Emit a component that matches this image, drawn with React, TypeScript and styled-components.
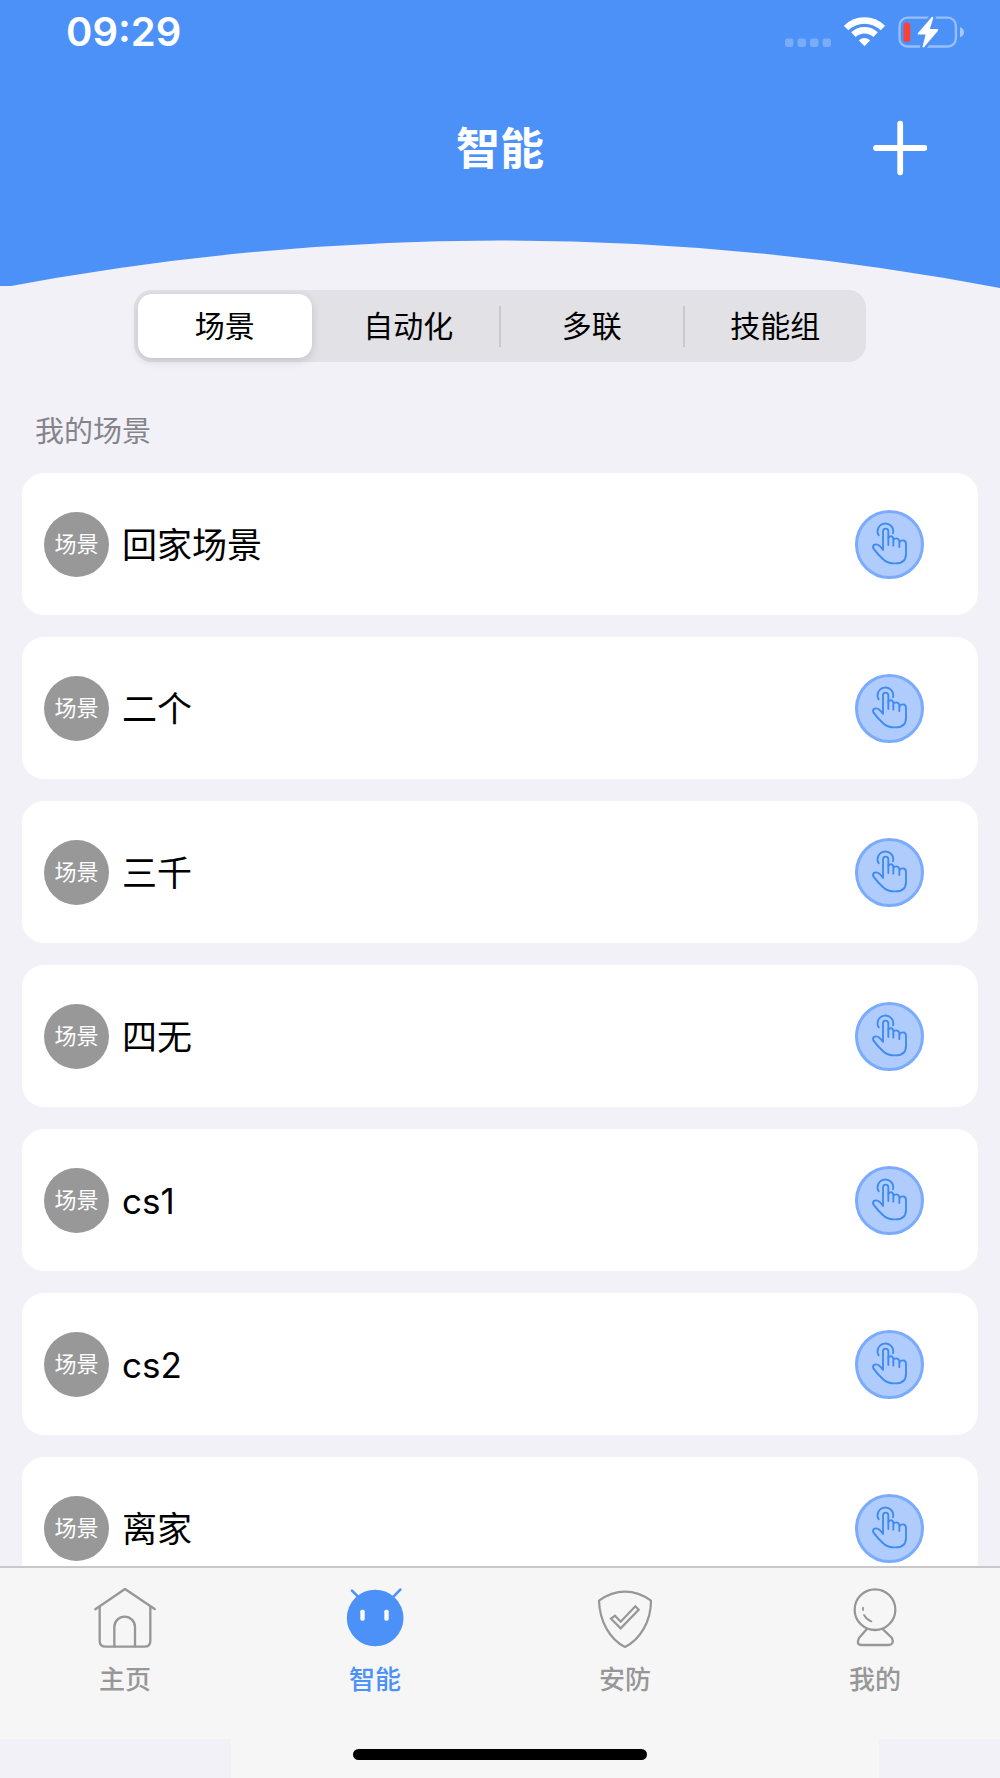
import React, { useState } from "react";
import styled, { createGlobalStyle } from "styled-components";

const blue = "#4c91f7";
const pageBg = "#f2f1f7";
const barBg = "#f6f6f6";
const grey = "#979797";

const GlobalStyle = createGlobalStyle`
  * { box-sizing: border-box; }
  body {
    margin: 0;
    background: ${pageBg};
    font-family: Inter, "Noto Sans CJK SC", sans-serif;
    color: #000;
  }
  button { font: inherit; color: inherit; border: 0; padding: 0; background: none; cursor: pointer; }
  svg { display: block; }
`;

const Page = styled.div`
  display: flex;
  flex-direction: column;
  height: 100vh;
  overflow: hidden;
`;

const Header = styled.header`
  display: flex;
  flex-direction: column;
  background: ${blue};
  color: #fff;
`;

const StatusBar = styled.div`
  display: flex;
  align-items: center;
  justify-content: space-between;
  height: 64px;
  padding: 0 36px 0 66px;
`;

const Clock = styled.time`
  font-size: 40px;
  line-height: 48px;
  font-weight: 600;
`;

const StatusIcons = styled.div`
  display: flex;
  align-items: center;
  gap: 13px;
`;

const TitleRow = styled.div`
  display: grid;
  grid-template-columns: 1fr auto 1fr;
  align-items: center;
  height: 168px;
  padding: 0 73px;
`;

const Title = styled.h1`
  grid-column: 2;
  margin: 0;
  padding-top: 2px;
  font-size: 44px;
  line-height: 64px;
  font-weight: 700;
`;

const AddButton = styled.button`
  justify-self: end;
`;

const Curve = styled.svg`
  width: 100%;
  height: 56px;
`;

const Main = styled.main`
  flex: 1;
  min-height: 0;
  display: flex;
  flex-direction: column;
`;

const Segments = styled.div`
  display: grid;
  grid-template-columns: 1fr 2px 1fr 2px 1fr 2px 1fr;
  align-items: center;
  width: 73.2%;
  height: 72px;
  margin: 2px auto 0;
  flex: none;
  border-radius: 18px;
  background: #e2e1e6;
`;

const Segment = styled.button<{ $active: boolean }>`
  align-self: stretch;
  margin: ${(p) => (p.$active ? "4px" : "0")};
  border-radius: 14px;
  font-size: 30px;
  line-height: 40px;
  background: ${(p) => (p.$active ? "#fff" : "transparent")};
  box-shadow: ${(p) => (p.$active ? "0 3px 10px rgba(0, 0, 0, 0.14)" : "none")};
`;

const Divider = styled.span<{ $hidden: boolean }>`
  height: 41px;
  background: ${(p) => (p.$hidden ? "transparent" : "#cac9ce")};
`;

const SectionTitle = styled.h2`
  flex: none;
  margin: 49px 35px 20px;
  font-size: 29px;
  line-height: 42px;
  font-weight: 400;
  color: #85848a;
`;

const SceneList = styled.ul`
  flex: 1;
  min-height: 0;
  overflow-y: auto;
  scrollbar-width: none;
  margin: 0;
  padding: 0 22px;
  list-style: none;
  display: flex;
  flex-direction: column;
  gap: 22px;
`;

const SceneCard = styled.li`
  flex: none;
  display: flex;
  align-items: center;
  gap: 13px;
  height: 142px;
  padding: 0 54px 0 22px;
  border-radius: 22px;
  background: #fff;
`;

const Badge = styled.span`
  display: grid;
  place-items: center;
  width: 65px;
  height: 65px;
  border-radius: 50%;
  background: #989898;
  color: #fff;
  font-size: 22px;
  line-height: 32px;
`;

const SceneName = styled.span`
  flex: 1;
  padding-top: 2px;
  font-size: 35px;
  line-height: 50px;
`;

const TabBar = styled.nav`
  flex: none;
  display: grid;
  grid-template-columns: repeat(4, 1fr);
  height: 173px;
  border-top: 2px solid #c8c8c9;
  background: ${barBg};
`;

const Tab = styled.button<{ $active: boolean }>`
  display: flex;
  flex-direction: column;
  align-items: center;
  gap: 13px;
  padding-top: 19px;
  color: ${(p) => (p.$active ? blue : grey)};
  font-size: 26px;
  line-height: 36px;
  font-weight: 500;
`;

const HomeArea = styled.div`
  flex: none;
  display: flex;
  justify-content: center;
  height: 39px;
  padding-top: 10px;
  background: linear-gradient(
    to right,
    ${pageBg} 23.1%,
    ${barBg} 23.1%,
    ${barBg} 87.9%,
    ${pageBg} 87.9%
  );
`;

const HomeIndicator = styled.span`
  width: 29.4%;
  height: 11px;
  border-radius: 6px;
  background: #000;
`;

const SignalIcon = () => (
  <svg width="46" height="30" viewBox="0 0 46 30" fill="#fff" fillOpacity="0.26" aria-hidden="true">
    {[0, 12.5, 25, 37.5].map((x) => (
      <rect key={x} x={x} y="21.5" width="8.5" height="8.5" rx="2.4" />
    ))}
  </svg>
);

const WifiIcon = () => (
  <svg width="41" height="30" viewBox="0 0 41 30" fill="none" stroke="#fff" strokeWidth="6.4" aria-hidden="true">
    <path d="M2.1 11.1A26 26 0 0 1 38.9 11.1" />
    <path d="M9.4 17.6A16.2 16.2 0 0 1 31.6 17.6" />
    <path
      d="M15.3 23.4A8.2 8.2 0 0 1 25.7 23.4L20.5 28.8Z"
      fill="#fff"
      strokeWidth="1"
      strokeLinejoin="round"
    />
  </svg>
);

const boltPath =
  "M33.8 1L19.8 17.2Q19.3 18.4 20.5 18.4L27.6 18.4L24.6 30.5Q24.6 31.8 26 31.2L40.2 14.6Q40.7 13 39 13L31.8 13L35.3 2Q35 .2 33.8 1Z";

const BatteryIcon = () => (
  <svg width="66" height="32" viewBox="0 0 66 32" aria-hidden="true">
    <rect x="1.5" y="1.7" width="56.4" height="28.8" rx="8" fill="none" stroke="#fff" strokeOpacity="0.42" strokeWidth="2.3" />
    <path d="M62 11.2Q66 12.6 66 16.2T62 21.2Z" fill="#fff" fillOpacity="0.5" />
    <rect x="5.6" y="6.6" width="6.6" height="19.4" rx="3" fill="#ff4033" />
    <path d={boltPath} fill={blue} stroke={blue} strokeWidth="5" />
    <path d={boltPath} fill="#fff" />
  </svg>
);

const PlusIcon = () => (
  <svg width="54" height="56" viewBox="0 0 54 56" stroke="#fff" strokeWidth="5.8" strokeLinecap="round" aria-hidden="true">
    <path d="M3 28H51.5M27.2 3.7V52.3" />
  </svg>
);

const TapIcon = () => (
  <svg width="69" height="69" viewBox="106 89 207 207" fill="none" aria-hidden="true">
    <circle cx="209.5" cy="192.5" r="99" fill="#b0ccfd" stroke="#7aabfc" strokeWidth="9" />
    <g stroke="#3e8af3" strokeWidth="5.6" strokeLinecap="round" strokeLinejoin="round">
      <path d="M177 165A23.5 23.5 0 1 1 220 159" />
      <path d="M190 208V153A8 8 0 0 1 206 153V194" />
      <path d="M206 172Q214 163 221 173V196" />
      <path d="M222 177Q232 170 239 180V200" />
      <path d="M240 184Q247 178 254 181Q259 184 259 190V220Q259 249 228 249Q206 250 192 238Q174 222 161 204Q158 196 165 193Q172 190 179 196L190 208" />
    </g>
  </svg>
);

const HomeIcon = () => (
  <svg width="62" height="62" viewBox="277 112 186 186" fill="none" stroke="currentColor" strokeWidth="7" strokeLinecap="round" strokeLinejoin="round" aria-hidden="true">
    <path d="M281 179L370 118L459 178" />
    <path d="M294 171V273Q294 291 312 291H428Q446 291 446 273V171" />
    <path d="M338 290V232A31 31 0 0 1 400 232V290" />
  </svg>
);

const RobotIcon = () => (
  <svg width="62" height="62" viewBox="1032 112 186 186" aria-hidden="true">
    <circle cx="1125.5" cy="205" r="85" fill="currentColor" />
    <path d="M1056 123L1076 143M1201 120L1178 143" stroke="currentColor" strokeWidth="8" strokeLinecap="round" />
    <rect x="1081" y="180" width="13" height="33" rx="5" fill="#fff" />
    <rect x="1153" y="180" width="13" height="33" rx="5" fill="#fff" />
  </svg>
);

const ShieldIcon = () => (
  <svg width="62" height="62" viewBox="284 112 186 186" fill="none" stroke="currentColor" strokeWidth="6.6" strokeLinejoin="round" aria-hidden="true">
    <path d="M299 153Q336 126 377 126T455 153C455 216 422 269 377 292C332 269 301 216 299 153Z" />
    <path d="M335 207L347 198L364 216L408 170L418 180L364 236Z" strokeLinejoin="miter" />
  </svg>
);

const PersonIcon = () => (
  <svg width="62" height="62" viewBox="1034 112 186 186" fill="none" stroke="currentColor" strokeWidth="6.8" strokeLinecap="round" strokeLinejoin="round" aria-hidden="true">
    <circle cx="1127" cy="180" r="61" />
    <path d="M1102 239L1079 265Q1069 286 1087 286H1168Q1186 285 1178 265L1151 239" />
    <path d="M1091 174V181M1094 196Q1102 210 1116 215" strokeWidth="5.6" />
  </svg>
);

const segments = ["场景", "自动化", "多联", "技能组"];
const scenes = ["回家场景", "二个", "三千", "四无", "cs1", "cs2", "离家"];
const tabs = [
  { label: "主页", Icon: HomeIcon },
  { label: "智能", Icon: RobotIcon },
  { label: "安防", Icon: ShieldIcon },
  { label: "我的", Icon: PersonIcon },
];

export default function App() {
  const [segment, setSegment] = useState(0);
  const [tab, setTab] = useState(1);

  return (
    <Page>
      <GlobalStyle />
      <Header>
        <StatusBar>
          <Clock>09:29</Clock>
          <StatusIcons>
            <SignalIcon />
            <WifiIcon />
            <BatteryIcon />
          </StatusIcons>
        </StatusBar>
        <TitleRow>
          <Title>智能</Title>
          <AddButton type="button" aria-label="添加">
            <PlusIcon />
          </AddButton>
        </TitleRow>
        <Curve viewBox="0 0 1000 56" preserveAspectRatio="none" fill={pageBg} aria-hidden="true">
          <path d="M0 56Q500 -39 1000 56Z" />
          <path d="M0 54H12V56H0Z" />
        </Curve>
      </Header>

      <Main>
        <Segments role="group" aria-label="类型">
          {segments.map((name, i) => (
            <React.Fragment key={name}>
              {i > 0 && <Divider $hidden={segment === i || segment === i - 1} />}
              <Segment
                type="button"
                $active={segment === i}
                aria-pressed={segment === i}
                onClick={() => setSegment(i)}
              >
                {name}
              </Segment>
            </React.Fragment>
          ))}
        </Segments>

        <SectionTitle>我的场景</SectionTitle>
        <SceneList>
          {scenes.map((name) => (
            <SceneCard key={name}>
              <Badge>场景</Badge>
              <SceneName>{name}</SceneName>
              <button type="button" aria-label={`执行${name}`}>
                <TapIcon />
              </button>
            </SceneCard>
          ))}
        </SceneList>
      </Main>

      <TabBar>
        {tabs.map(({ label, Icon }, i) => (
          <Tab
            key={label}
            type="button"
            $active={tab === i}
            aria-current={tab === i ? "page" : undefined}
            onClick={() => setTab(i)}
          >
            <Icon />
            {label}
          </Tab>
        ))}
      </TabBar>
      <HomeArea>
        <HomeIndicator />
      </HomeArea>
    </Page>
  );
}
